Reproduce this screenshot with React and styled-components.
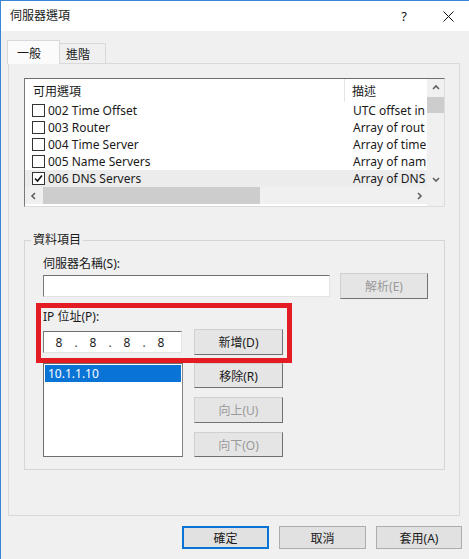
import React from 'react';
import styled, { createGlobalStyle } from 'styled-components';

const GlobalStyle = createGlobalStyle`
  html, body {
    margin: 0;
    padding: 0;
    background: #f0f0f0;
  }
  body {
    font-family: "Noto Sans", "Noto Sans CJK TC", sans-serif;
    font-size: 12px;
    color: #1a1a1a;
  }
`;

const Window = styled.div`
  width: 468px;
  height: 558px;
  border-top: 1px solid #3a86d4;
  border-left: 1px solid #3a86d4;
  background: #f0f0f0;
  display: flex;
  flex-direction: column;
`;

const TitleBar = styled.div`
  height: 30px;
  background: #fff;
  display: flex;
  align-items: center;
  padding-left: 9px;
`;

const Title = styled.div`
  flex: 1;
  font-size: 12px;
  line-height: 16px;
`;

const TitleButton = styled.div`
  width: ${p => p.$w}px;
  height: 30px;
  display: flex;
  align-items: center;
  justify-content: center;
  font-size: 13px;
  color: #111;
`;

const Content = styled.div`
  padding: 9px 8px 0 7px;
  display: flex;
  flex-direction: column;
`;

const TabStrip = styled.div`
  display: flex;
  align-items: flex-end;
  margin-left: -1px;
  height: 23px;
`;

const Tab = styled.div`
  position: relative;
  z-index: ${p => (p.$active ? 2 : 1)};
  height: ${p => (p.$active ? 24 : 20)}px;
  margin-bottom: ${p => (p.$active ? -1 : 0)}px;
  margin-left: ${p => (p.$active ? 0 : -1)}px;
  padding: 0 ${p => (p.$active ? 13 : 8)}px 0 ${p => (p.$active ? 9 : 6)}px;
  border: 1px solid #d9d9d9;
  border-bottom: none;
  background: ${p => (p.$active ? '#fbfbfb' : '#f0f0f0')};
  display: flex;
  align-items: center;
  box-sizing: border-box;
  min-width: ${p => (p.$active ? 53 : 47)}px;
`;

const Panel = styled.div`
  width: 452px;
  height: 453px;
  box-sizing: border-box;
  border: 1px solid #d9d9d9;
  background: #f0f0f0;
  padding: 14px 14px 0 15px;
  display: flex;
  flex-direction: column;
`;

const OptionList = styled.div`
  width: 421px;
  height: 129px;
  box-sizing: border-box;
  border: 1px solid;
  border-color: #6f6f6f #dcdcdc #dcdcdc #7a7a7a;
  background: #fff;
  display: flex;
`;

const ListMain = styled.div`
  width: 402px;
  display: flex;
  flex-direction: column;
`;

const HeaderRow = styled.div`
  height: 23px;
  display: flex;
  align-items: center;
`;

const HeaderCell = styled.div`
  width: ${p => p.$w}px;
  height: 23px;
  box-sizing: border-box;
  padding-left: ${p => p.$pad}px;
  display: flex;
  align-items: center;
  border-right: ${p => (p.$divider ? '1px solid #e5e5e5' : 'none')};
`;

const Row = styled.div`
  height: 17px;
  display: flex;
  align-items: center;
  background: ${p => (p.$selected ? '#ececec' : 'transparent')};
  white-space: nowrap;
`;

const NameCell = styled.div`
  width: 320px;
  display: flex;
  align-items: center;
  padding-left: 7px;
  box-sizing: border-box;
  gap: 3px;
`;

const DescCell = styled.div`
  width: 82px;
  padding-left: 8px;
  box-sizing: border-box;
  white-space: nowrap;
`;

const CheckBox = styled.div`
  width: 13px;
  height: 13px;
  box-sizing: border-box;
  border: 1px solid #333;
  background: #fff;
  display: flex;
  align-items: center;
  justify-content: center;
`;

const HScroll = styled.div`
  height: 17px;
  background: #f0f0f0;
  display: flex;
  align-items: center;
`;

const ScrollArrow = styled.div`
  width: 17px;
  height: 17px;
  display: flex;
  align-items: center;
  justify-content: center;
  flex-shrink: 0;
`;

const HThumb = styled.div`
  width: 217px;
  height: 17px;
  background: #cdcdcd;
  margin-left: 1px;
`;

const Track = styled.div`
  flex: 1;
`;

const VScrollColumn = styled.div`
  width: 17px;
  display: flex;
  flex-direction: column;
`;

const VScroll = styled.div`
  height: 108px;
  background: #f0f0f0;
  display: flex;
  flex-direction: column;
`;

const VThumb = styled.div`
  height: 16px;
  background: #cdcdcd;
  margin-top: 1px;
`;

const Corner = styled.div`
  flex: 1;
  background: #f0f0f0;
`;

const Group = styled.fieldset`
  margin: 25px 0 0;
  padding: 0;
  width: 421px;
  height: 238px;
  box-sizing: border-box;
  border: 1px solid #d5d5d5;
  border-radius: 0;
  min-width: 0;
`;

const Legend = styled.legend`
  margin-left: 6px;
  padding: 0 2px;
  line-height: 16px;
  font-size: 12px;
`;

const GroupBody = styled.div`
  padding: 8px 0 0 18px;
  display: flex;
  flex-direction: column;
`;

const Label = styled.div`
  line-height: 16px;
  margin-top: ${p => p.$mt || 0}px;
`;

const FieldRow = styled.div`
  display: flex;
  align-items: center;
  gap: ${p => p.$gap}px;
  margin-top: ${p => p.$mt || 0}px;
`;

const TextInput = styled.div`
  width: ${p => p.$w}px;
  height: 22px;
  box-sizing: border-box;
  border: 1px solid;
  border-color: #6e6e6e #e3e3e3 #e3e3e3 #7a7a7a;
  background: #fff;
`;

const IpBox = styled(TextInput)`
  display: flex;
  align-items: center;
  padding-left: 1px;
`;

const IpPart = styled.div`
  width: 28px;
  text-align: center;
`;

const IpDot = styled.div`
  width: 6px;
  text-align: center;
  color: #444;
`;

const Button = styled.div`
  width: ${p => p.$w}px;
  height: ${p => p.$h || 26}px;
  box-sizing: border-box;
  border: 1px solid;
  border-color: #d0d0d0 #707070 #707070 #d0d0d0;
  background: #e5e5e5;
  display: flex;
  align-items: center;
  justify-content: center;
  color: ${p => (p.$disabled ? '#9a9a9a' : '#1a1a1a')};
`;

const IpSection = styled.div`
  position: relative;
  display: flex;
  flex-direction: column;
`;

const Highlight = styled.div`
  position: absolute;
  left: -7px;
  top: 4px;
  width: 256px;
  height: 60px;
  box-sizing: border-box;
  border: 5px solid #e31b23;
  pointer-events: none;
`;

const ListArea = styled.div`
  display: flex;
  gap: 11px;
  margin-top: 8px;
`;

const AddressList = styled.div`
  width: 140px;
  height: 94px;
  box-sizing: border-box;
  border: 1px solid;
  border-color: #6e6e6e #828282 #6e6e6e #6e6e6e;
  background: #fff;
  padding: 1px;
`;

const AddressItem = styled.div`
  height: 17px;
  line-height: 17px;
  padding-left: 3px;
  background: ${p => (p.$selected ? '#0a74d6' : 'transparent')};
  color: ${p => (p.$selected ? '#fff' : '#1a1a1a')};
`;

const ButtonColumn = styled.div`
  display: flex;
  flex-direction: column;
  gap: 9px;
`;

const Footer = styled.div`
  display: flex;
  justify-content: flex-end;
  gap: 10px;
  padding-top: 10px;
  margin-right: -1px;
`;

const DialogButton = styled.div`
  width: ${p => p.$w || 86}px;
  height: 23px;
  box-sizing: border-box;
  border: ${p => (p.$default ? '2px solid #0a74d6' : '1px solid #adadad')};
  background: #e1e1e1;
  display: flex;
  align-items: center;
  justify-content: center;
`;

const Chevron = ({ dir }) => {
  const paths = {
    up: 'M2 6 L5 3 L8 6',
    down: 'M2 4 L5 7 L8 4',
    left: 'M6 2 L3 5 L6 8',
    right: 'M4 2 L7 5 L4 8',
  };
  return (
    <svg width="10" height="10" viewBox="0 0 10 10">
      <path d={paths[dir]} fill="none" stroke="#606060" strokeWidth="1.6" />
    </svg>
  );
};

// only the part of each description that the narrow column shows
const options = [
  { name: '002 Time Offset', desc: 'UTC offset in' },
  { name: '003 Router', desc: 'Array of rout' },
  { name: '004 Time Server', desc: 'Array of time' },
  { name: '005 Name Servers', desc: 'Array of nam' },
  { name: '006 DNS Servers', desc: 'Array of DNS', checked: true },
];

export default function App() {
  return (
    <>
      <GlobalStyle />
      <Window>
        <TitleBar>
          <Title>伺服器選項</Title>
          <TitleButton $w={46}>?</TitleButton>
          <TitleButton $w={42}>
            <svg width="11" height="11" viewBox="0 0 11 11">
              <path d="M0.5 0.5 L10.5 10.5 M10.5 0.5 L0.5 10.5" stroke="#111" strokeWidth="1" />
            </svg>
          </TitleButton>
        </TitleBar>

        <Content>
          <TabStrip>
            <Tab $active>一般</Tab>
            <Tab>進階</Tab>
          </TabStrip>
          <Panel>
            <OptionList>
              <ListMain>
                <HeaderRow>
                  <HeaderCell $w={320} $pad={8} $divider>可用選項</HeaderCell>
                  <HeaderCell $w={82} $pad={7}>描述</HeaderCell>
                </HeaderRow>
                {options.map(o => (
                  <Row key={o.name} $selected={o.checked}>
                    <NameCell>
                      <CheckBox>
                        {o.checked && (
                          <svg width="9" height="9" viewBox="0 0 9 9">
                            <path d="M1 4.5 L3.5 7 L8 1.5" fill="none" stroke="#111" strokeWidth="1.6" />
                          </svg>
                        )}
                      </CheckBox>
                      {o.name}
                    </NameCell>
                    <DescCell>{o.desc}</DescCell>
                  </Row>
                ))}
                <HScroll>
                  <ScrollArrow><Chevron dir="left" /></ScrollArrow>
                  <HThumb />
                  <Track />
                  <ScrollArrow><Chevron dir="right" /></ScrollArrow>
                </HScroll>
              </ListMain>
              <VScrollColumn>
                <VScroll>
                  <ScrollArrow><Chevron dir="up" /></ScrollArrow>
                  <VThumb />
                  <Track />
                  <ScrollArrow><Chevron dir="down" /></ScrollArrow>
                </VScroll>
                <Corner />
              </VScrollColumn>
            </OptionList>

            <Group>
              <Legend>資料項目</Legend>
              <GroupBody>
                <Label>伺服器名稱(S):</Label>
                <FieldRow $gap={10} $mt={1}>
                  <TextInput $w={287} />
                  <Button $w={88} $disabled>解析(E)</Button>
                </FieldRow>

                <IpSection>
                  <Label $mt={10}>IP 位址(P):</Label>
                  <FieldRow $gap={12} $mt={4}>
                    <IpBox $w={139}>
                      <IpPart>8</IpPart>
                      <IpDot>.</IpDot>
                      <IpPart>8</IpPart>
                      <IpDot>.</IpDot>
                      <IpPart>8</IpPart>
                      <IpDot>.</IpDot>
                      <IpPart>8</IpPart>
                    </IpBox>
                    <Button $w={89}>新增(D)</Button>
                  </FieldRow>
                  <Highlight />
                </IpSection>

                <ListArea>
                  <AddressList>
                    <AddressItem $selected>10.1.1.10</AddressItem>
                  </AddressList>
                  <ButtonColumn>
                    <Button $w={89} $h={25}>移除(R)</Button>
                    <Button $w={89} $h={26} $disabled>向上(U)</Button>
                    <Button $w={89} $h={25} $disabled>向下(O)</Button>
                  </ButtonColumn>
                </ListArea>
              </GroupBody>
            </Group>
          </Panel>

          <Footer>
            <DialogButton $default $w={87}>確定</DialogButton>
            <DialogButton $w={87}>取消</DialogButton>
            <DialogButton $w={86}>套用(A)</DialogButton>
          </Footer>
        </Content>
      </Window>
    </>
  );
}
